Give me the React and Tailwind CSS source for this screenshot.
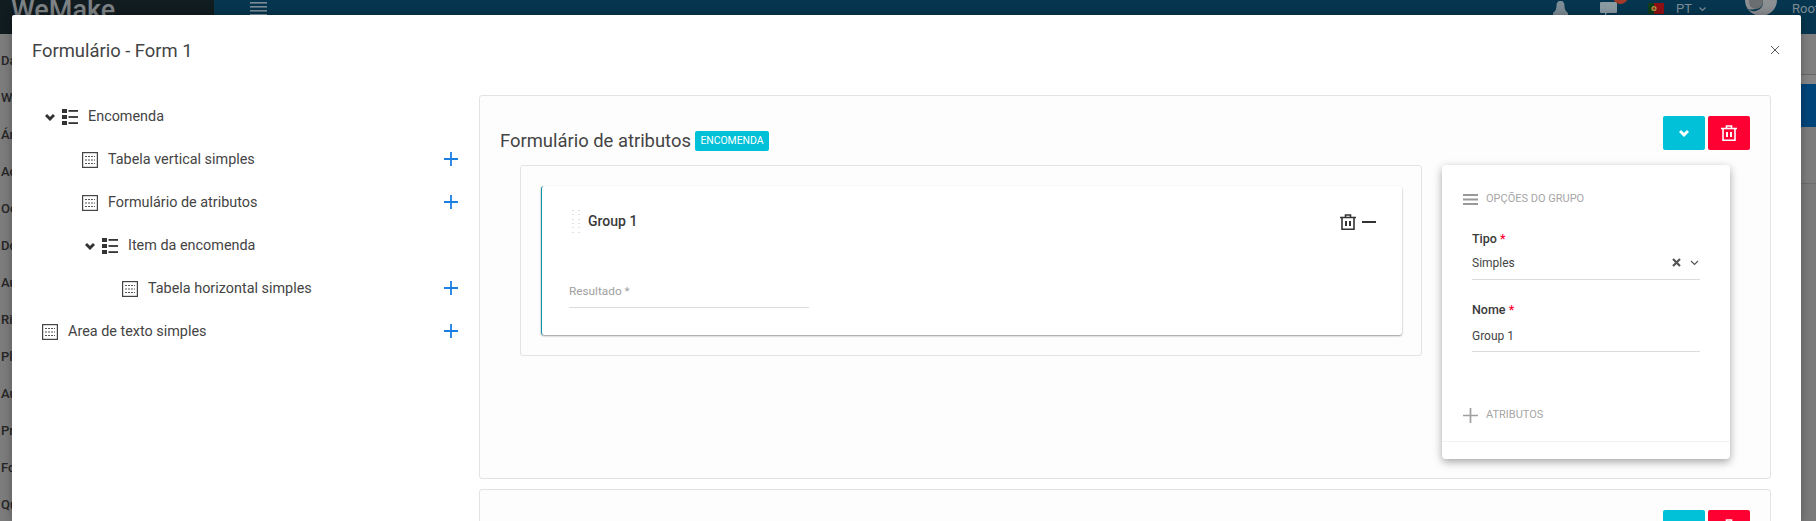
import React from "react";

const roboto = "font-['Roboto',sans-serif]";

function TableIcon() {
  return (
    <svg width="16" height="16" viewBox="0 0 16 16" className="shrink-0" fill="none" stroke="#444">
      <rect x="0.6" y="0.6" width="14.8" height="14.8" strokeWidth="1.2" />
      <path d="M3 4.5h10M3 8h10M3 11.5h10" stroke="#555" strokeWidth="1" strokeDasharray="2 1" />
    </svg>
  );
}

function ListIcon() {
  return (
    <svg width="16" height="16" viewBox="0 0 16 16" className="shrink-0" fill="#333">
      <rect x="0" y="0" width="5" height="4" />
      <rect x="0" y="6" width="5" height="4" />
      <rect x="0" y="12" width="5" height="4" />
      <rect x="6.5" y="1" width="9.5" height="1.8" />
      <rect x="6.5" y="7.1" width="9.5" height="1.8" />
      <rect x="6.5" y="13.2" width="9.5" height="1.8" />
    </svg>
  );
}

function Chevron({ color = "#333", size = 10, w = 3 }) {
  return (
    <svg width={size} height={size} viewBox="0 0 10 10" className="shrink-0" fill="none" stroke={color} strokeWidth={w}>
      <path d="M1 3l4 4 4-4" />
    </svg>
  );
}

function Plus({ color = "#1a7fe0", size = 14, w = 1.8 }) {
  return (
    <svg width={size} height={size} viewBox="0 0 14 14" className="shrink-0" fill="none" stroke={color} strokeWidth={w}>
      <path d="M7 0v14M0 7h14" />
    </svg>
  );
}

function Trash({ color = "#333", size = 16, w = 1.6 }) {
  return (
    <svg width={size} height={size} viewBox="0 0 16 16" className="shrink-0" fill="none" stroke={color} strokeWidth={w}>
      <path d="M0 3.5h16M5.5 3V1h5v2M2 3.5v11.7h12V3.5" />
      <path d="M6 7v5M10 7v5" strokeWidth="2" />
    </svg>
  );
}

function TreeRow({ kind, label, indent }) {
  return (
    <div className="flex h-[43px] items-center" style={{ paddingLeft: indent }}>
      {kind === "list" ? (
        <>
          <Chevron />
          <span className="w-[7px]" />
          <ListIcon />
          <span className="ml-[10px] text-[14.4px] text-[#444]">{label}</span>
        </>
      ) : (
        <>
          <TableIcon />
          <span className="ml-[10px] text-[14.4px] text-[#444]">{label}</span>
          <span className="ml-auto -mt-[1px]"><Plus /></span>
        </>
      )}
    </div>
  );
}

const sideLetters = ["Da", "W", "Ár", "Ac", "Oc", "Do", "Au", "Ri", "Pl", "Au", "Pr", "Fo", "Qu"];

function Backdrop() {
  return (
    <div className="flex h-full w-full flex-col">
      <div className="flex h-[34px] shrink-0 bg-[#06364f]">
        <div className="h-full w-[214px] shrink-0 overflow-hidden bg-[#111c20] pl-[11px]">
          <span className="-mt-[4px] block text-[27px] leading-[28px] font-medium text-[#7d8285]">WeMake</span>
        </div>
        <div className="flex flex-1 items-start pl-[36px]">
          <svg width="17" height="16" viewBox="0 0 17 16" fill="#7d8c95" className="mt-[1px] shrink-0">
            <rect y="1" width="17" height="1.6" />
            <rect y="5" width="17" height="1.6" />
            <rect y="9" width="17" height="1.6" />
            <rect y="13" width="17" height="1.6" />
          </svg>
          <div className="ml-auto flex items-start">
            <svg width="15" height="16" viewBox="0 0 15 16" fill="#7d8c95" className="mt-[1px] shrink-0">
              <path d="M7.5 0C10.5 0 11.5 2 11.5 5c0 3 1 5 3.5 7v4H0v-4c2.500-2 3.500-4 3.500-7 0-3 1-5 4-5z" />
            </svg>
            <svg width="17" height="15" viewBox="0 0 17 15" fill="#8a9aa2" className="ml-[32px] mt-[1px] shrink-0">
              <path d="M1 1h15a1 1 0 0 1 1 1v9a1 1 0 0 1-1 1H7l-2 3v-3H1a1 1 0 0 1-1-1V2a1 1 0 0 1 1-1z" />
            </svg>
            <span className="relative h-0 w-0">
              <span className="absolute -left-[4px] -top-[8px] h-[12px] w-[15px] rounded-b-full bg-[#a33a2a]" />
            </span>
            <svg width="16" height="11" viewBox="0 0 16 11" className="ml-[31px] mt-[3px] shrink-0">
              <rect width="6" height="11" fill="#0c3d1c" />
              <rect x="6" width="10" height="11" fill="#8f0f14" />
              <circle cx="6" cy="5.500" r="2.600" fill="#a89a40" />
              <circle cx="6" cy="5.500" r="1.200" fill="#8f2a20" />
            </svg>
            <span className="ml-[12px] w-[15px] text-[13px] leading-[17px] text-[#7d8c95]">PT</span>
            <svg width="7" height="5" viewBox="0 0 7 5" fill="none" stroke="#7d8c95" strokeWidth="1.2" className="ml-[8px] mt-[7px] shrink-0">
              <path d="M0.5 0.5l3 3 3-3" />
            </svg>
            <svg width="32" height="17" viewBox="0 0 32 17" className="ml-[39px] shrink-0">
              <circle cx="16" cy="0" r="16" fill="#8b8f92" />
              <path d="M3 9c3 3 9 3 13-1 2-2 2-5 2-8h-1.500c0 3-1 5-2 6.500C11 10 6 10 3 9z" fill="#06364f" />
              <circle cx="11" cy="2" r="7" fill="#6a6e70" />
            </svg>
            <span className="ml-[15px] w-[24px] overflow-hidden text-[13px] leading-[17px] text-[#7d8c95]">Root</span>
          </div>
        </div>
      </div>
      <div className="flex flex-1 bg-[#7c7c7c]">
        <div className="flex w-[12px] flex-col overflow-hidden pl-[1px] pt-[18px]">
          {sideLetters.map((l, i) => (
            <div key={i} className="h-[37px] shrink-0 text-[13px] leading-[18px] font-medium text-[#262626]">{l}</div>
          ))}
        </div>
        <div className="ml-auto flex w-[15px] flex-col">
          <div className="h-[41px] shrink-0 border-b border-[#666] bg-[#7f7f7f]" />
          <div className="h-[9px] shrink-0 bg-[#858585]" />
          <div className="h-[43px] shrink-0 bg-[#00457a]" />
          <div className="h-[57px] shrink-0 border-b border-[#6c6c6c] bg-[#7c7c7c]" />
          <div className="flex-1 bg-[#7a7a7a]" />
        </div>
      </div>
    </div>
  );
}

function Field({ label, value, right, mt, inner }) {
  return (
    <div className={mt}>
      <div className="text-[12.5px] leading-[18px] font-medium text-[#3a3a3a]">
        {label} <span className="text-[#ff0033]">*</span>
      </div>
      <div className={`flex items-start border-b border-[#dcdcdc] text-[12px] leading-[18px] text-[#444] ${inner}`}>
        {value}
        {right}
      </div>
    </div>
  );
}

function OptionsCard() {
  return (
    <div className="flex h-[294px] w-[288px] shrink-0 flex-col rounded-[4px] bg-white shadow-[0_3px_9px_rgba(0,0,0,0.35)]">
      <div className="ml-[21px] mt-[28px] flex h-[12px] items-center">
        <svg width="15" height="11" viewBox="0 0 15 11" fill="#999" className="shrink-0">
          <rect width="15" height="2" />
          <rect y="4.5" width="15" height="2" />
          <rect y="9" width="15" height="2" />
        </svg>
        <span className="ml-[8px] text-[11px] text-[#a5a5a5]">OPÇÕES DO GRUPO</span>
      </div>
      <div className="ml-[30px] mr-[30px] mt-[25px]">
        <Field
          inner="mt-[6px] h-[26px]"
          label="Tipo"
          value="Simples"
          right={
            <span className="ml-auto mr-[1px] mt-[4px] flex items-center gap-[9px]">
              <svg width="9" height="9" viewBox="0 0 9 9" fill="none" stroke="#555" strokeWidth="2.2" className="shrink-0">
                <path d="M1 1l7 7M8 1l-7 7" />
              </svg>
              <svg width="9" height="9" viewBox="0 0 9 9" fill="none" stroke="#555" strokeWidth="1.2" className="shrink-0">
                <path d="M1 3l3.500 3.500L8 3" />
              </svg>
            </span>
          }
        />
        <Field mt="mt-[21px]" inner="mt-[8px] h-[25px]" label="Nome" value="Group 1" />
      </div>
      <div className="ml-[21px] mt-[56px] flex h-[14px] items-center">
        <Plus color="#a0a0a0" size={15} w={1.6} />
        <span className="ml-[8px] text-[11px] text-[#a5a5a5]">ATRIBUTOS</span>
      </div>
      <div className="mt-[19px] border-t border-[#f2f2f2]" />
    </div>
  );
}

function GroupCard() {
  const dots = Array.from({ length: 12 });
  return (
    <div className="h-[149px] rounded-[3px] border-l border-l-[#0a95a8] bg-white shadow-[0_1px_2px_rgba(0,0,0,0.4)]">
      <div className="flex items-start pl-[30px] pr-[26px] pt-[24px]">
        <div className="grid h-[23px] w-[8px] grid-cols-2 gap-x-[3px] gap-y-[3px]">
          {dots.map((_, i) => (
            <span key={i} className="h-[1px] w-[2px] bg-[#e0e0e0]" />
          ))}
        </div>
        <span className="ml-[8px] mt-[1px] text-[14px] leading-[20px] font-medium text-[#3a3a3a]">Group 1</span>
        <span className="ml-auto mt-[4px] flex items-center gap-[6px]">
          <Trash />
          <span className="h-[2px] w-[14px] bg-[#333]" />
        </span>
      </div>
      <div className="ml-[27px] mt-[49px] h-[26px] w-[240px] border-b border-[#dcdcdc] text-[11.8px] leading-[18px] text-[#a0a0a0]">
        Resultado *
      </div>
    </div>
  );
}

function ActionButtons() {
  return (
    <div className="flex gap-[3px]">
      <span className="flex h-[34px] w-[42px] items-center justify-center rounded-[2px] bg-[#00c1d8]">
        <Chevron color="#fff" size={10} />
      </span>
      <span className="flex h-[34px] w-[42px] items-center justify-center rounded-[2px] bg-[#ff0033]">
        <Trash color="#fff" />
      </span>
    </div>
  );
}

export default function App() {
  return (
    <div className={`relative h-[521px] w-[1816px] overflow-hidden ${roboto}`}>
      <Backdrop />
      <div className="absolute bottom-0 left-[12px] top-[15px] w-[1789px] overflow-hidden rounded-t-[2px] bg-white shadow-[0_0_10px_rgba(0,0,0,0.3)]">
        <div className="flex h-[80px] items-start justify-between pl-[20px] pr-[21px] pt-[24px]">
          <span className="text-[18.4px] leading-[24px] text-[#444]">Formulário - Form 1</span>
          <svg width="10" height="10" viewBox="0 0 10 10" fill="none" stroke="#555" strokeWidth="1" className="mt-[6px]">
            <path d="M1 1l8 8M9 1l-8 8" />
          </svg>
        </div>
        <div className="flex">
          <div className="w-[467px] shrink-0 pr-[21px]">
            <TreeRow kind="list" label="Encomenda" indent={33} />
            <TreeRow kind="table" label="Tabela vertical simples" indent={70} />
            <TreeRow kind="table" label="Formulário de atributos" indent={70} />
            <TreeRow kind="list" label="Item da encomenda" indent={73} />
            <TreeRow kind="table" label="Tabela horizontal simples" indent={110} />
            <TreeRow kind="table" label="Area de texto simples" indent={30} />
          </div>
          <div className="flex w-[1292px] shrink-0 flex-col gap-[10px]">
            <div className="h-[384px] rounded-[3px] border border-[#e3e3e3] bg-[#fdfdfd]">
              <div className="flex h-[69px] items-start justify-between pl-[20px] pr-[20px] pt-[20px]">
                <div className="mt-[13px] flex items-center">
                  <span className="text-[18.4px] leading-[24px] text-[#444]">Formulário de atributos</span>
                  <span className="ml-[4px] flex h-[20px] items-center rounded-[2px] bg-[#00c1d8] px-[5.5px] text-[10.4px] text-white">ENCOMENDA</span>
                </div>
                <ActionButtons />
              </div>
              <div className="flex items-start pl-[40px] pr-[40px]">
                <div className="h-[191px] flex-1 rounded-[3px] border border-[#e3e3e3] p-[20px] pr-[19px]">
                  <GroupCard />
                </div>
                <div className="ml-[20px]"><OptionsCard /></div>
              </div>
            </div>
            <div className="h-[200px] rounded-[3px] border border-[#e3e3e3] bg-[#fdfdfd]">
              <div className="flex justify-end pr-[20px] pt-[20px]">
                <ActionButtons />
              </div>
            </div>
          </div>
        </div>
      </div>
    </div>
  );
}
